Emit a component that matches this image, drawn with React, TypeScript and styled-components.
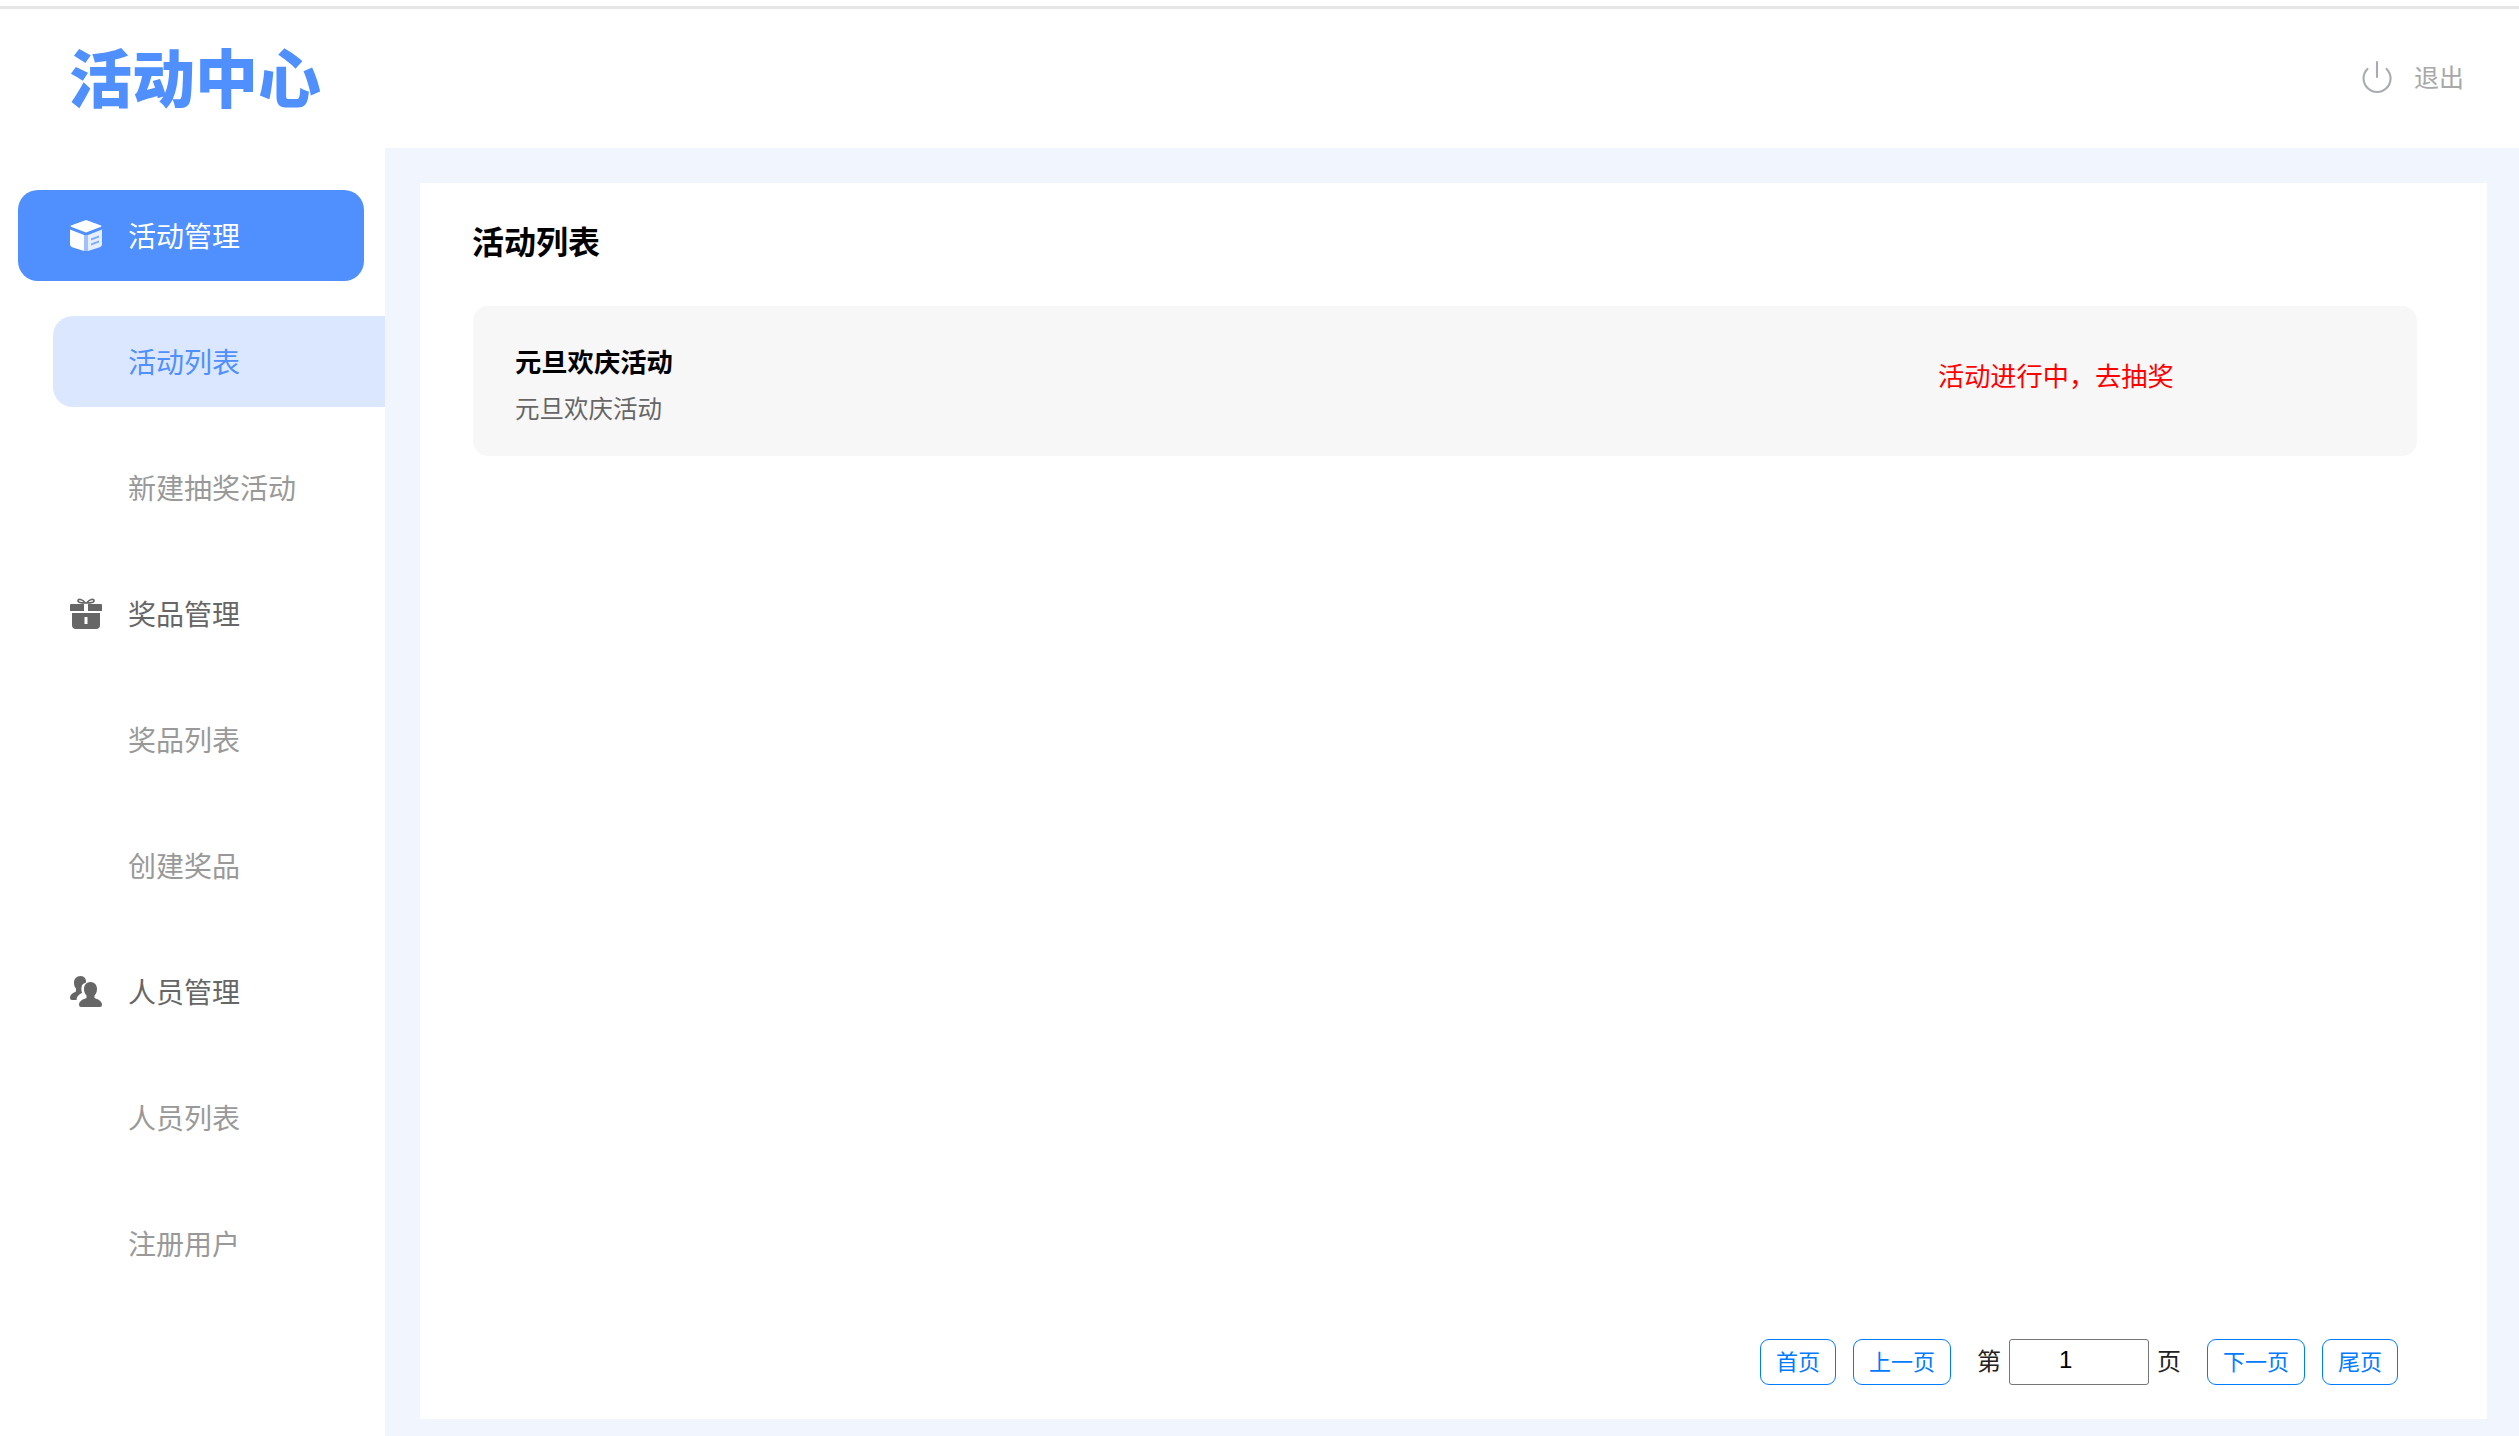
import { createGlobalStyle, styled } from "styled-components";
import { Power } from "lucide-react";

const FONT = `"Noto Sans CJK SC", "Noto Sans", sans-serif`;

const GlobalStyle = createGlobalStyle`
  html, body {
    margin: 0;
    padding: 0;
    height: 100%;
    background: #fff;
    overflow: hidden;
    font-family: ${FONT};
  }
`;

const Page = styled.div`
  display: flex;
  flex-direction: column;
  height: 1436px;
`;

const Header = styled.header`
  flex: none;
  height: 139px;
  margin-top: 6px;
  border-top: 3px solid #e6e6e6;
  display: flex;
  align-items: center;
  justify-content: space-between;
  padding: 0 55px 0 69px;
`;

const Logo = styled.div`
  font-size: 63px;
  font-weight: 900;
  line-height: 70px;
  color: #4f8ffe;
  margin-top: -8px;
`;

const Logout = styled.div`
  display: flex;
  align-items: center;
  gap: 19px;
  font-size: 25px;
  line-height: 36px;
  color: #a8a8a8;
  margin-bottom: 3px;
`;

const Body = styled.div`
  flex: 1;
  display: flex;
  min-height: 0;
`;

const Sidebar = styled.nav`
  flex: none;
  width: 385px;
  box-sizing: border-box;
  padding-top: 42px;
  display: flex;
  flex-direction: column;
  gap: 35px;
`;

const MenuItem = styled.div<{ $active?: boolean }>`
  height: 91px;
  display: flex;
  align-items: center;
  gap: 26px;
  box-sizing: border-box;
  font-size: 28px;
  color: ${(p) => (p.$active ? "#fff" : "#666")};
  background: ${(p) => (p.$active ? "#4f8ffe" : "transparent")};
  border-radius: 20px;
  margin: 0 21px 0 18px;
  padding-left: 52px;
`;

const SubItem = styled.div<{ $active?: boolean }>`
  height: 91px;
  display: flex;
  align-items: center;
  box-sizing: border-box;
  font-size: 28px;
  color: ${(p) => (p.$active ? "#4f8ffe" : "#999")};
  background: ${(p) => (p.$active ? "#dbe7fe" : "transparent")};
  border-radius: 20px 0 0 20px;
  margin-left: 53px;
  padding-left: 75px;
`;

// CJK font sits a little low in its line box
const MenuText = styled.span`
  margin-bottom: 2px;
`;

const Main = styled.main`
  flex: 1;
  display: flex;
  background: #f1f5fd;
  padding: 35px 32px 17px 35px;
  min-width: 0;
`;

const Card = styled.section`
  flex: 1;
  display: flex;
  flex-direction: column;
  background: #fff;
  padding: 37px 70px 34px 52px;
`;

const Title = styled.h2`
  margin: 0 0 46px;
  font-size: 32px;
  font-weight: 700;
  line-height: 40px;
  color: #000;
`;

const ActivityRow = styled.div`
  height: 150px;
  flex: none;
  display: flex;
  background: #f7f7f7;
  border-radius: 15px;
  margin-left: 1px;
  padding-left: 42px;
`;

const ActivityInfo = styled.div`
  width: 1423px;
  flex: none;
  padding-top: 36px;
`;

const ActivityName = styled.div`
  font-size: 26.3px;
  font-weight: 700;
  line-height: 38px;
  color: #000;
`;

const ActivityDesc = styled.div`
  font-size: 24.5px;
  line-height: 36px;
  margin-top: 10px;
  color: #666;
`;

const ActivityStatus = styled.div`
  font-size: 26.2px;
  line-height: 38px;
  color: #ff0000;
  padding-top: 50px;
`;

const Pager = styled.div`
  margin-top: auto;
  margin-right: 19px;
  display: flex;
  align-items: center;
  justify-content: flex-end;
  font-size: 24px;
  color: #222;
`;

const PageButton = styled.button<{ $gap?: number }>`
  height: 46px;
  box-sizing: border-box;
  padding: 0 15px 5px;
  background: #fff;
  border: 1px solid #007bff;
  border-radius: 9px;
  color: #007bff;
  font-family: ${FONT};
  font-size: 22px;
  line-height: 1;
  margin-left: ${(p) => p.$gap ?? 0}px;
`;

const PageLabel = styled.span<{ $left: number; $right: number }>`
  margin: 0 ${(p) => p.$right}px 5px ${(p) => p.$left}px;
`;

const PageInput = styled.input`
  width: 140px;
  height: 46px;
  box-sizing: border-box;
  border: 1px solid #767676;
  border-radius: 3px;
  padding: 0 0 4px 49px;
  font-family: "Liberation Sans", sans-serif;
  font-size: 24px;
  color: #000;
  background: #fff;
`;

const CubeIcon = () => (
  <svg width="32" height="32" viewBox="0 0 32 32" fill="#fff">
    <path d="M16 0 L31 5.5 Q32 6 31 6.8 L16 12.5 L1 6.8 Q0 6 1 5.5 Z" />
    <path d="M0 9.5 L14 15 V31 L3 27.5 Q0 26.5 0 24 Z" />
    <path d="M18 15 L32 9.5 V24 Q32 26.5 29 27.5 L18 31 Z" opacity="0.85" />
    <path d="M14 15 H18 V31 H14 Z" opacity="0.45" />
    <path d="M21 18.5 L29 15.5 V17.5 L21 20.5 Z M21 23.5 L29 20.5 V22.5 L21 25.5 Z" fill="#4f8ffe" opacity="0.7" />
  </svg>
);

const GiftIcon = () => (
  <svg width="32" height="32" viewBox="0 0 32 32" fill="#666">
    <path d="M1 6 H14 V13 H0 V7 Q0 6 1 6 Z M18 6 H31 Q32 6 32 7 V13 H18 Z" />
    <path d="M2 15 H30 V27 Q30 31 26 31 H6 Q2 31 2 27 Z" />
    <path d="M14.5 19 H17.5 V26 H14.5 Z" fill="#fff" />
    <path
      d="M15.5 5 C12 1 8.5 0.5 8 2.5 C7.6 4.5 11 5 15.5 5 Z M16.5 5 C20 1 23.5 0.5 24 2.5 C24.4 4.5 21 5 16.5 5 Z"
      fill="none"
      stroke="#666"
      strokeWidth="1.6"
    />
  </svg>
);

const UsersIcon = () => (
  <svg width="32" height="32" viewBox="0 0 32 32" fill="#666">
    <path d="M10.5 0 C14.5 0 16.5 3 16 6.5 L13 8 C11 10 11 14 12 17 L10 18 C8 19.5 6.5 21 6.5 24 H2 Q0 24 0 22 C0 18.5 3 17 6 15.5 V12.5 C4.5 11 4 9 4 6.5 C4 3 6.5 0 10.5 0 Z" />
    <path d="M20.5 6 C24.5 6 27 9 27 13 C27 16 26 18 24.5 19.5 V22 C27.5 23 32 25 32 28.5 Q32 31 30 31 H11 Q9 31 9 28.5 C9 25 13.5 23 16.5 22 V19.5 C15 18 14 16 14 13 C14 9 16.5 6 20.5 6 Z" />
  </svg>
);

const App = () => {
  return (
    <Page>
      <GlobalStyle />
      <Header>
        <Logo>活动中心</Logo>
        <Logout>
          <Power size={36} strokeWidth={1.4} color="#a8abb0" />
          <MenuText>退出</MenuText>
        </Logout>
      </Header>
      <Body>
        <Sidebar>
          <MenuItem $active>
            <CubeIcon />
            <MenuText>活动管理</MenuText>
          </MenuItem>
          <SubItem $active>
            <MenuText>活动列表</MenuText>
          </SubItem>
          <SubItem>
            <MenuText>新建抽奖活动</MenuText>
          </SubItem>
          <MenuItem>
            <GiftIcon />
            <MenuText>奖品管理</MenuText>
          </MenuItem>
          <SubItem>
            <MenuText>奖品列表</MenuText>
          </SubItem>
          <SubItem>
            <MenuText>创建奖品</MenuText>
          </SubItem>
          <MenuItem>
            <UsersIcon />
            <MenuText>人员管理</MenuText>
          </MenuItem>
          <SubItem>
            <MenuText>人员列表</MenuText>
          </SubItem>
          <SubItem>
            <MenuText>注册用户</MenuText>
          </SubItem>
        </Sidebar>
        <Main>
          <Card>
            <Title>活动列表</Title>
            <ActivityRow>
              <ActivityInfo>
                <ActivityName>元旦欢庆活动</ActivityName>
                <ActivityDesc>元旦欢庆活动</ActivityDesc>
              </ActivityInfo>
              <ActivityStatus>活动进行中，去抽奖</ActivityStatus>
            </ActivityRow>
            <Pager>
              <PageButton>首页</PageButton>
              <PageButton $gap={17}>上一页</PageButton>
              <PageLabel $left={26} $right={8}>第</PageLabel>
              <PageInput defaultValue="1" />
              <PageLabel $left={8} $right={26}>页</PageLabel>
              <PageButton>下一页</PageButton>
              <PageButton $gap={17}>尾页</PageButton>
            </Pager>
          </Card>
        </Main>
      </Body>
    </Page>
  );
};

export default App;
